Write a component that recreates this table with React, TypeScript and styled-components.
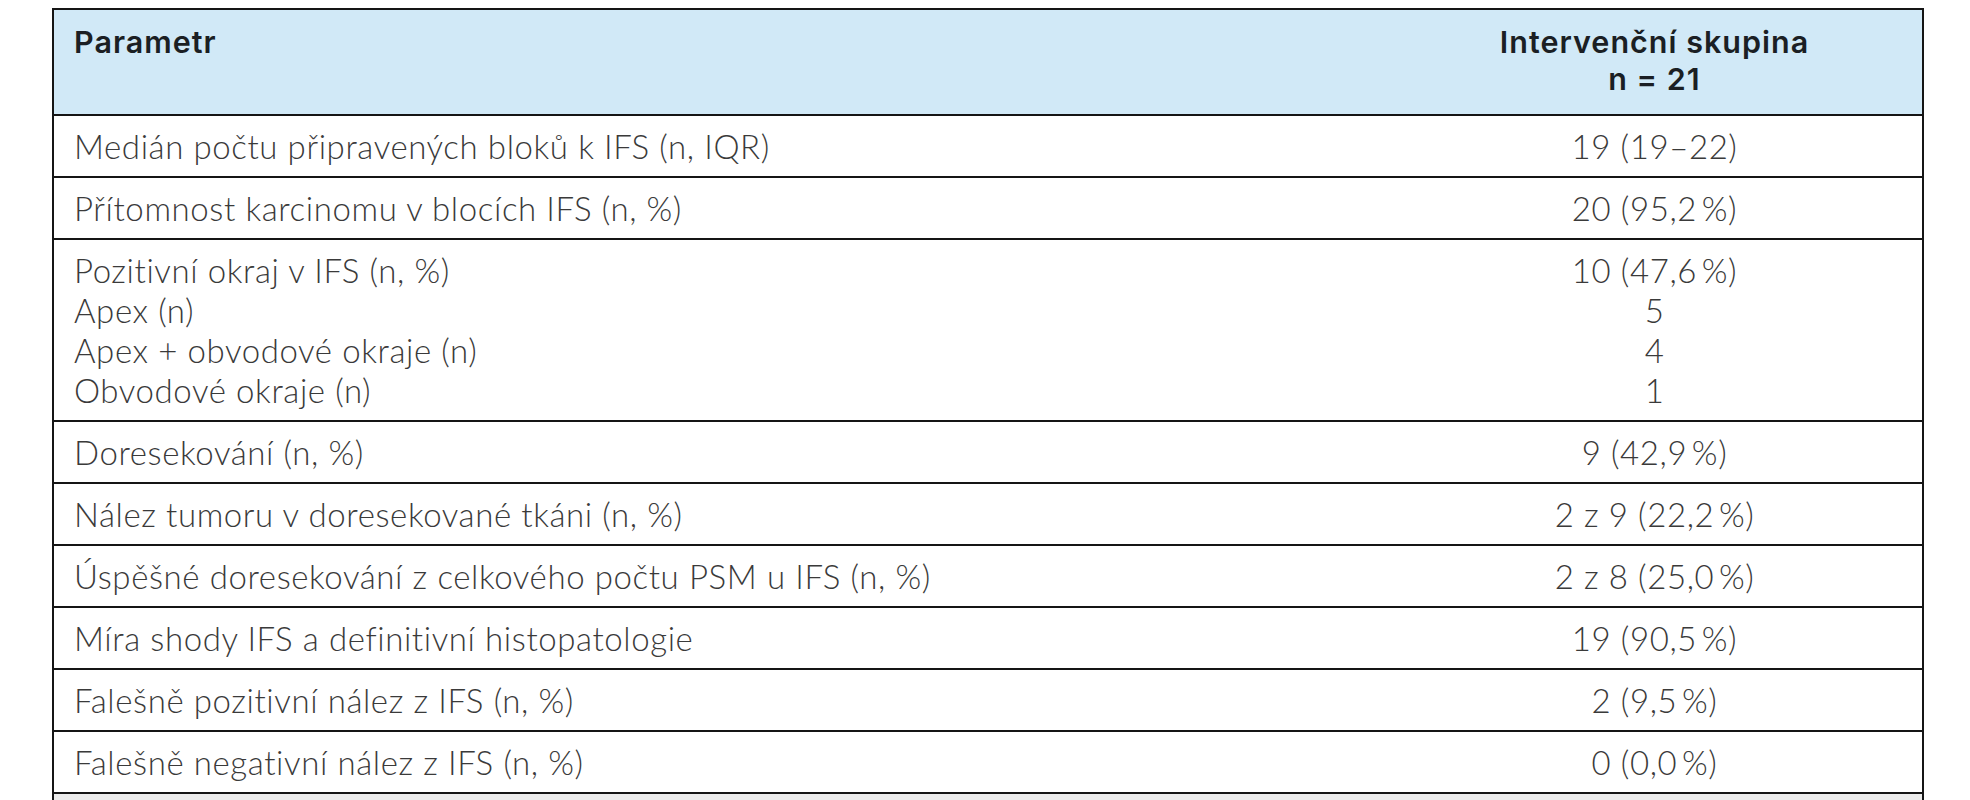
import React from "react";
import styled, { createGlobalStyle } from "styled-components";

const GlobalStyle = createGlobalStyle`
  html, body {
    margin: 0;
    padding: 0;
    background: #ffffff;
  }
`;

const Page = styled.div`
  padding: 8px 0 0 52px;
  width: 1970px;
  height: 800px;
  overflow: hidden;
  box-sizing: border-box;
`;

const Table = styled.table`
  width: 1870px;
  border-collapse: collapse;
  border: 2px solid #151515;
  font-family: Lato, "Open Sans", sans-serif;
  font-size: 33px;
  table-layout: fixed;
`;

const HeadCell = styled.th<{ $center?: boolean }>`
  background: #d1e9f7;
  color: #1b1f24;
  font-family: Inter, "Open Sans", sans-serif;
  font-weight: 600;
  font-size: 30.5px;
  letter-spacing: 1px;
  text-align: ${(p) => (p.$center ? "center" : "left")};
  vertical-align: top;
  line-height: 37px;
  padding: 13px 20px 14px 20px;
  height: 77px;
`;

const Cell = styled.td<{ $center?: boolean }>`
  color: #3a3a3a;
  font-weight: 300;
  text-align: ${(p) => (p.$center ? "center" : "left")};
  vertical-align: top;
  line-height: 40px;
  padding: 10px 20px 10px 20px;
  border-top: 2px solid #151515;
  letter-spacing: 0.6px;
`;

const Line = styled.div``;

const FootCell = styled.td`
  background: #ebebeb;
  border-top: 2px solid #151515;
  height: 40px;
`;

type Row = { label: string[]; value: string[] };

const rows: Row[] = [
  { label: ["Medián počtu připravených bloků k IFS (n, IQR)"], value: ["19 (19–22)"] },
  { label: ["Přítomnost karcinomu v blocích IFS (n, %)"], value: ["20 (95,2\u2009%)"] },
  {
    label: [
      "Pozitivní okraj v IFS (n, %)",
      "Apex (n)",
      "Apex + obvodové okraje (n)",
      "Obvodové okraje (n)",
    ],
    value: ["10 (47,6\u2009%)", "5", "4", "1"],
  },
  { label: ["Doresekování (n, %)"], value: ["9 (42,9\u2009%)"] },
  { label: ["Nález tumoru v doresekované tkáni (n, %)"], value: ["2 z 9 (22,2\u2009%)"] },
  {
    label: ["Úspěšné doresekování z celkového počtu PSM u IFS (n, %)"],
    value: ["2 z 8 (25,0\u2009%)"],
  },
  { label: ["Míra shody IFS a definitivní histopatologie"], value: ["19 (90,5\u2009%)"] },
  { label: ["Falešně pozitivní nález z IFS (n, %)"], value: ["2 (9,5\u2009%)"] },
  { label: ["Falešně negativní nález z IFS (n, %)"], value: ["0 (0,0\u2009%)"] },
];

export default function App() {
  return (
    <>
      <GlobalStyle />
      <Page>
        <Table>
          <colgroup>
            <col style={{ width: "1334px" }} />
            <col style={{ width: "536px" }} />
          </colgroup>
          <thead>
            <tr>
              <HeadCell>Parametr</HeadCell>
              <HeadCell $center>
                <Line>Intervenční skupina</Line>
                <Line>n = 21</Line>
              </HeadCell>
            </tr>
          </thead>
          <tbody>
            {rows.map((r, i) => (
              <tr key={i}>
                <Cell>
                  {r.label.map((l, j) => (
                    <Line key={j}>{l}</Line>
                  ))}
                </Cell>
                <Cell $center>
                  {r.value.map((v, j) => (
                    <Line key={j}>{v}</Line>
                  ))}
                </Cell>
              </tr>
            ))}
            <tr>
              <FootCell colSpan={2} />
            </tr>
          </tbody>
        </Table>
      </Page>
    </>
  );
}
